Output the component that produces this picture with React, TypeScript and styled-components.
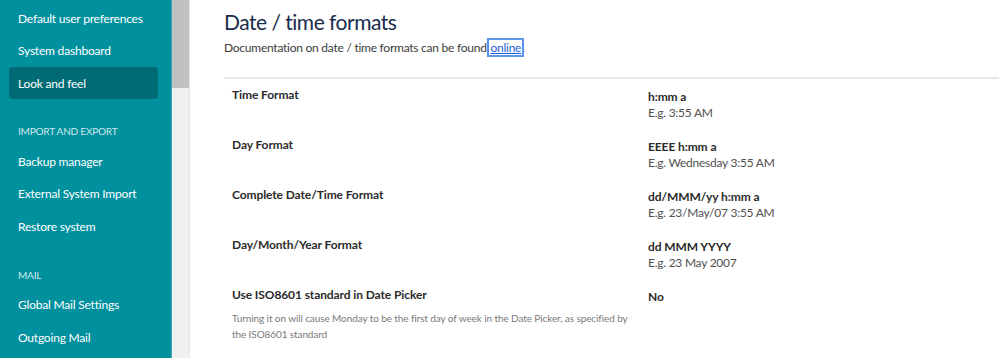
import { createGlobalStyle, styled } from "styled-components";

const GlobalStyle = createGlobalStyle`
  html, body {
    margin: 0;
    padding: 0;
    background: #ffffff;
    font-family: Lato, "Open Sans", Arial, sans-serif;
  }
`;

const Page = styled.div`
  display: flex;
  height: 358px;
  overflow: hidden;
`;

const Sidebar = styled.nav`
  width: 172px;
  flex: none;
  background: #00909e;
  padding: 2px 13px 0 9px;
  box-sizing: border-box;
  border-right: 1px solid #3aa9b3;
`;

const NavItem = styled.div<{ $active?: boolean }>`
  display: flex;
  align-items: center;
  padding-left: 9px;
  border-radius: 3px;
  font-size: 12px;
  letter-spacing: -0.2px;
  color: #ffffff;
  white-space: nowrap;
  background: ${(p) => (p.$active ? "#006b75" : "transparent")};
  height: ${(p) => (p.$active ? "32px" : "32.5px")};
`;

const GroupTitle = styled.div`
  margin-top: 22px;
  margin-bottom: 4px;
  height: 20px;
  display: flex;
  align-items: center;
  padding-left: 9px;
  font-size: 10px;
  letter-spacing: -0.2px;
  text-transform: uppercase;
  color: rgba(255, 255, 255, 0.82);
`;

const ScrollTrack = styled.div`
  width: 17px;
  flex: none;
  background: #f0f0f0;
  border-right: 1px solid #e3e3e3;
`;

const ScrollThumb = styled.div`
  height: 88px;
  background: #c1c1c1;
`;

const Main = styled.main`
  flex: 1;
  padding: 6px 0 0 34px;
  min-width: 0;
`;

const Title = styled.h1`
  margin: 0;
  font-size: 21px;
  letter-spacing: -0.5px;
  font-weight: 400;
  line-height: 32px;
  color: #172b4d;
`;

const Intro = styled.p`
  margin: 1px 0 0;
  font-size: 12px;
  letter-spacing: -0.25px;
  line-height: 18px;
  color: #3b3b3b;
`;

const DocLink = styled.a`
  color: #1f5fd6;
  text-decoration: underline;
  outline: 2px solid #5b95ea;
  outline-offset: 0px;
  padding: 0 1px;
`;

const Divider = styled.hr`
  margin: 20px 0 0;
  border: none;
  height: 2px;
  background: #e6e6ec;
`;

const Settings = styled.div`
  display: flex;
  flex-direction: column;
  padding-top: 7px;
`;

const Row = styled.div`
  display: grid;
  grid-template-columns: 416px 1fr;
  height: 50px;
  padding-left: 8px;
`;

const LabelCell = styled.div`
  display: flex;
  flex-direction: column;
  padding-right: 6px;
`;

const Label = styled.div`
  font-size: 12px;
  letter-spacing: -0.1px;
  font-weight: 700;
  line-height: 18px;
  color: #2b2b2b;
`;

const Description = styled.div`
  margin-top: 6px;
  font-size: 10px;
  letter-spacing: -0.1px;
  line-height: 16px;
  color: #7a7a7a;
`;

const ValueCell = styled.div`
  padding-top: 3px;
  display: flex;
  flex-direction: column;
`;

const Value = styled.div`
  font-size: 12px;
  letter-spacing: -0.1px;
  font-weight: 700;
  line-height: 16px;
  color: #2b2b2b;
`;

const Example = styled.div`
  font-size: 12px;
  letter-spacing: -0.25px;
  line-height: 16px;
  color: #505050;
`;

type Setting = {
  label: string;
  value: string;
  example?: string;
  description?: string;
};

const settings: Setting[] = [
  { label: "Time Format", value: "h:mm a", example: "E.g. 3:55 AM" },
  { label: "Day Format", value: "EEEE h:mm a", example: "E.g. Wednesday 3:55 AM" },
  {
    label: "Complete Date/Time Format",
    value: "dd/MMM/yy h:mm a",
    example: "E.g. 23/May/07 3:55 AM",
  },
  { label: "Day/Month/Year Format", value: "dd MMM YYYY", example: "E.g. 23 May 2007" },
  {
    label: "Use ISO8601 standard in Date Picker",
    value: "No",
    description:
      "Turning it on will cause Monday to be the first day of week in the Date Picker, as specified by the ISO8601 standard",
  },
];

const App = () => {
  return (
    <>
      <GlobalStyle />
      <Page>
        <Sidebar>
          <NavItem>Default user preferences</NavItem>
          <NavItem>System dashboard</NavItem>
          <NavItem $active>Look and feel</NavItem>

          <GroupTitle>Import and export</GroupTitle>
          <NavItem>Backup manager</NavItem>
          <NavItem>External System Import</NavItem>
          <NavItem>Restore system</NavItem>

          <GroupTitle>Mail</GroupTitle>
          <NavItem>Global Mail Settings</NavItem>
          <NavItem>Outgoing Mail</NavItem>
        </Sidebar>
        <ScrollTrack>
          <ScrollThumb />
        </ScrollTrack>

        <Main>
          <Title>Date / time formats</Title>
          <Intro>
            Documentation on date / time formats can be found{" "}
            <DocLink href="#">online</DocLink>.
          </Intro>
          <Divider />

          <Settings>
            {settings.map((s) => (
              <Row key={s.label}>
                <LabelCell>
                  <Label>{s.label}</Label>
                  {s.description && <Description>{s.description}</Description>}
                </LabelCell>
                <ValueCell>
                  <Value>{s.value}</Value>
                  {s.example && <Example>{s.example}</Example>}
                </ValueCell>
              </Row>
            ))}
          </Settings>
        </Main>
      </Page>
    </>
  );
};

export default App;
